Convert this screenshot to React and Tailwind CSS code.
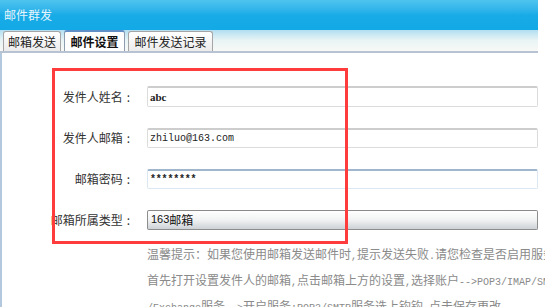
import React from "react";

function Mixed({ text, monoClass = "font-['Liberation_Mono',monospace] text-[10px]" }) {
  const parts = text.split(/([\x00-\x7f]+)/).filter((p) => p.length);
  return (
    <>
      {parts.map((p, i) =>
        /^[\x00-\x7f]+$/.test(p) ? (
          <span key={i} className={monoClass + " whitespace-pre"}>
            {p}
          </span>
        ) : (
          <span key={i}>{p}</span>
        )
      )}
    </>
  );
}

function Row({ label, children }) {
  return (
    <div className="flex items-center h-[21px]">
      <div className="w-[128px] text-right text-[12px] text-[#333] leading-none whitespace-nowrap">
        {label}
        <span className="ml-[4px]">:</span>
      </div>
      <div className="ml-[17px] w-[391px]">{children}</div>
    </div>
  );
}

export default function App() {
  return (
    <div className="w-[545px] h-[307px] bg-white overflow-hidden relative font-['Noto_Sans_CJK_SC','Noto_Sans',sans-serif]">
      <div className="w-[538px]">
        <div className="h-[30px] bg-gradient-to-b from-[#4ec4ef] via-[#18ace7] to-[#12a9e6] flex items-center pl-[4px] text-[12px] text-[#e6f5fc] leading-none">
          邮件群发
        </div>
        <div className="h-[23px] bg-gradient-to-b from-[#b1def1] via-[#e9f4f5] to-[#f8f9f6] border-b-2 border-[#b7c3d3] flex items-end pl-[3px] gap-[3px]">
          <div className="h-[20px] w-[58px] border border-b-0 border-[#a5a5a5] rounded-t-[3px] bg-gradient-to-b from-white to-[#ececec] flex items-center justify-center text-[12px] text-[#222] leading-none">
            邮箱发送
          </div>
          <div className="h-[21px] w-[61px] border border-b-0 border-[#8e9cb0] border-t-2 border-t-[#5f8fc6] rounded-t-[3px] bg-white flex items-center justify-center text-[12px] font-bold text-[#111] leading-none">
            邮件设置
          </div>
          <div className="h-[20px] w-[85px] border border-b-0 border-[#a5a5a5] rounded-t-[3px] bg-gradient-to-b from-white to-[#ececec] flex items-center justify-center text-[12px] text-[#222] leading-none">
            邮件发送记录
          </div>
        </div>
      </div>

      <div className="border-l-2 border-[#b3c8dc] h-[254px] pt-[33px]">
        <div className="flex flex-col gap-[20px]">
          <Row label="发件人姓名">
            <div className="h-[21px] border border-[#dcdcdc] border-t-2 border-t-[#cdcdcd] rounded-[2px] flex items-center pl-[2px] bg-white">
              <span className="font-['Liberation_Serif',serif] text-[11px] font-bold text-[#222]">abc</span>
            </div>
          </Row>
          <Row label="发件人邮箱">
            <div className="h-[20px] border border-[#dcdcdc] border-t-2 border-t-[#cdcdcd] rounded-[2px] flex items-center pl-[2px] bg-white">
              <span className="font-['Liberation_Mono',monospace] text-[10px] text-[#222]">zhiluo@163.com</span>
            </div>
          </Row>
          <Row label="邮箱密码">
            <div className="h-[20px] border border-[#dbe8f3] border-t-2 border-t-[#9fb6cd] rounded-[2px] flex items-center pl-[2px] bg-white">
              <span className="font-['Liberation_Mono',monospace] text-[10px] font-bold text-[#222] tracking-[-0.2px]">********</span>
            </div>
          </Row>
          <Row label="邮箱所属类型">
            <div className="h-[20px] border border-[#8d8d8d] border-t-[#8a8a8a] rounded-[2px] flex items-center pl-[3px] bg-gradient-to-b from-white via-[#f1f2f3] to-[#cdd2d6] text-[12px] text-[#111] leading-none">
              <span className="font-['Liberation_Sans',sans-serif] text-[11px]">163</span>邮箱
            </div>
          </Row>
        </div>

        <div className="ml-[145px] mt-[12px] text-[12px] text-[#8a8a8a] leading-[23px] whitespace-nowrap">
          <div>
            <Mixed text="温馨提示：如果您使用邮箱发送邮件时,提示发送失败.请您检查是否启用服务" />
          </div>
          <div>
            <Mixed text="首先打开设置发件人的邮箱,点击邮箱上方的设置,选择账户-->POP3/IMAP/SMTP" />
          </div>
          <div>
            <Mixed text="/Exchange服务-->开启服务:POP3/SMTP服务选上钩钩,点击保存更改." />
          </div>
        </div>
      </div>

      <div className="absolute left-[52px] top-[68px] w-[296px] h-[176px] border-[3px] border-[#ff3c3c] pointer-events-none" />
    </div>
  );
}
